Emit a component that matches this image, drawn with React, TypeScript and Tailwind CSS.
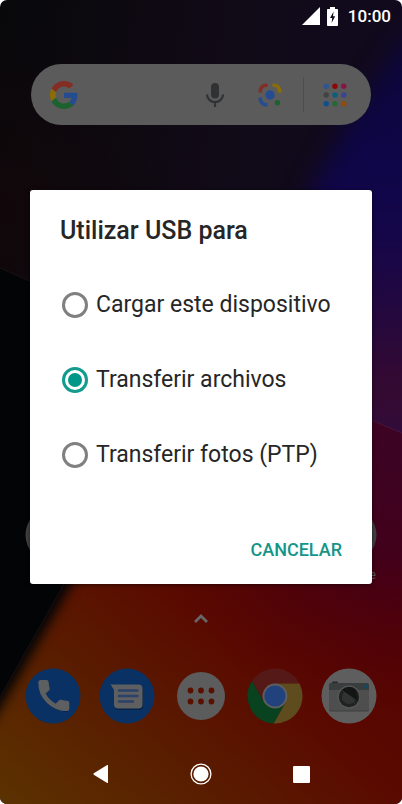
import { useState } from 'react';
import type { ReactNode } from 'react';

const USB_MODES = [
  { value: 'charge', label: 'Cargar este dispositivo' },
  { value: 'files', label: 'Transferir archivos' },
  { value: 'photos', label: 'Transferir fotos (PTP)' },
];

const Wallpaper = () => (
  <svg
    className="absolute inset-0 size-full"
    viewBox="0 0 402 804"
    preserveAspectRatio="none"
    aria-hidden="true"
  >
    <defs>
      <linearGradient id="night" x1="0" y1="0" x2="1" y2="0.3">
        <stop offset="0" stopColor="#08080a" />
        <stop offset="0.5" stopColor="#110a16" />
        <stop offset="1" stopColor="#110a20" />
      </linearGradient>
      <linearGradient id="side" gradientUnits="userSpaceOnUse" x1="0" y1="20" x2="0" y2="440">
        <stop offset="0" stopColor="#0d0738" />
        <stop offset="0.35" stopColor="#0e0648" />
        <stop offset="0.5" stopColor="#14064a" />
        <stop offset="0.7" stopColor="#24083e" />
        <stop offset="0.88" stopColor="#350a30" />
        <stop offset="1" stopColor="#300c3c" />
      </linearGradient>
      <linearGradient id="ember" gradientUnits="userSpaceOnUse" x1="0" y1="804" x2="300" y2="480">
        <stop offset="0" stopColor="#5c3200" />
        <stop offset="0.3" stopColor="#591f00" />
        <stop offset="0.62" stopColor="#5a0a00" />
        <stop offset="1" stopColor="#540002" />
      </linearGradient>
      <radialGradient id="wine" gradientUnits="userSpaceOnUse" cx="402" cy="450" r="270">
        <stop offset="0" stopColor="#3c0424" />
        <stop offset="0.4" stopColor="#42001a" />
        <stop offset="1" stopColor="#520004" stopOpacity="0" />
      </radialGradient>
      <radialGradient id="dusk" gradientUnits="userSpaceOnUse" cx="0" cy="210" r="180">
        <stop offset="0" stopColor="#11070a" />
        <stop offset="1" stopColor="#11070a" stopOpacity="0" />
      </radialGradient>
      <filter
        id="soft"
        filterUnits="userSpaceOnUse"
        x="-100"
        y="-100"
        width="700"
        height="1000"
        colorInterpolationFilters="sRGB"
      >
        <feGaussianBlur stdDeviation="6" />
      </filter>
      <filter
        id="haze"
        filterUnits="userSpaceOnUse"
        x="-100"
        y="-100"
        width="700"
        height="1000"
        colorInterpolationFilters="sRGB"
      >
        <feGaussianBlur stdDeviation="12" />
      </filter>
    </defs>
    <rect width="402" height="804" fill="url(#night)" />
    <rect width="402" height="804" fill="url(#dusk)" />
    <path d="M460 -10 L396 50 L345 130 L306 200 V500 H460Z" fill="url(#side)" filter="url(#haze)" />
    <path d="M340 407 L402 433 V804 H0 V560 H340Z" fill="url(#ember)" />
    <path d="M340 407 L402 433 V804 H0 V560 H340Z" fill="url(#wine)" />
    <path d="M340 407 L402 433" stroke="#451540" strokeWidth="1" />
    <path d="M-60 440 H120 L72 584 L2 706 L-60 800Z" fill="#030406" filter="url(#soft)" />
    <path d="M0 268 L60 294 V591 L0 697Z" fill="#030406" />
    <path d="M0 268 L60 294" stroke="#1d1114" strokeWidth="1" />
    <path d="M64 584 L0 697" stroke="#151214" strokeWidth="1" />
  </svg>
);

const StatusBar = () => (
  <header className="relative flex h-8 items-center justify-end px-[11px] text-white">
    <svg className="mr-[7px] size-[18px]" viewBox="0 0 18 18" aria-hidden="true">
      <path d="M0 18 L18 0 V18Z" fill="currentColor" />
    </svg>
    <svg className="mr-[10px] h-[19px] w-[11px]" viewBox="0 0 11 19" aria-hidden="true">
      <path
        d="M3 0H8V2H10.2Q11 2 11 2.8V18.2Q11 19 10.2 19H.8Q0 19 0 18.2V2.8Q0 2 .8 2H3Z"
        fill="currentColor"
      />
      <path d="M6.6 4.6 L3 11 H5.2 L4.6 16 L8.2 9.2 H6Z" fill="#140d1c" />
    </svg>
    <time className="text-[17px] leading-5 font-medium">10:00</time>
  </header>
);

const GoogleLogo = () => (
  <svg className="size-7" viewBox="0 0 48 48" aria-hidden="true">
    <path
      fill="#842d24"
      d="M24 9.5c3.54 0 6.71 1.22 9.21 3.6l6.85-6.85C35.9 2.38 30.47 0 24 0 14.62 0 6.51 5.38 2.56 13.22l7.98 6.19C12.43 13.72 17.74 9.5 24 9.5z"
    />
    <path
      fill="#254c90"
      d="M46.98 24.55c0-1.57-.15-3.09-.38-4.55H24v9.02h12.94c-.58 2.96-2.26 5.48-4.78 7.18l7.73 6c4.51-4.18 7.09-10.36 7.09-17.65z"
    />
    <path
      fill="#8a6c08"
      d="M10.53 28.59c-.48-1.45-.76-2.99-.76-4.59s.27-3.14.76-4.59l-7.98-6.19C.92 16.46 0 20.12 0 24c0 3.88.92 7.54 2.56 10.78l7.97-6.19z"
    />
    <path
      fill="#1c622f"
      d="M24 48c6.48 0 11.93-2.13 15.89-5.81l-7.73-6c-2.15 1.45-4.92 2.3-8.16 2.3-6.26 0-11.57-4.22-13.47-9.91l-7.98 6.19C6.51 42.62 14.62 48 24 48z"
    />
  </svg>
);

const LAUNCHER_DOTS = [
  '#2d5494', '#8f0508', '#8a1440',
  '#404244', '#0a5f80', '#3a4494',
  '#0f4f8c', '#246a36', '#944a08',
];

const SearchBar = () => (
  <div className="relative mx-[31px] mt-8 flex h-[61px] items-center rounded-full bg-[#5b5b5b] pr-[24px] pl-[19px]">
    <GoogleLogo />
    <input
      type="search"
      aria-label="Buscar en Google"
      className="h-full min-w-0 flex-1 bg-transparent px-2 outline-none"
    />
    <button type="button" aria-label="Búsqueda por voz">
      <svg className="h-6 w-[18px]" viewBox="0 0 18 24" fill="none">
        <rect x="5" width="8" height="15.5" rx="4" fill="#303234" />
        <path d="M1 11.5a8 7.6 0 0 0 16 0M9 19v5" stroke="#303234" strokeWidth="2.2" />
      </svg>
    </button>
    <button type="button" aria-label="Google Lens" className="ml-[34px]">
      <svg className="size-6" viewBox="0 0 24 24" fill="none" strokeWidth="3.6">
        <path d="M2.3 9.5V8a5.7 5.7 0 0 1 5.7-5.7h1.5" stroke="#842d24" />
        <path d="M14.5 2.3H16A5.7 5.7 0 0 1 21.7 8v1.5" stroke="#8a6c08" />
        <path d="M2.3 14.5V16A5.7 5.7 0 0 0 8 21.7h1.5" stroke="#254c90" />
        <circle cx="12" cy="12" r="4.7" fill="#254c90" />
        <circle cx="19.5" cy="19.7" r="2.7" fill="#1c622f" />
      </svg>
    </button>
    <span className="ml-[21px] h-[35px] w-px bg-[#4e4e4e]" />
    <button type="button" aria-label="Aplicaciones" className="ml-[19px]">
      <svg className="size-6" viewBox="0 0 24 24">
        {LAUNCHER_DOTS.map((color, i) => (
          <circle
            key={color}
            cx={3.2 + (i % 3) * 8.8}
            cy={3.2 + Math.floor(i / 3) * 8.8}
            r="2.7"
            fill={color}
          />
        ))}
      </svg>
    </button>
  </div>
);

const HANDSET =
  'M6.62 10.79c1.44 2.83 3.76 5.14 6.59 6.59l2.2-2.2c.27-.27.67-.36 1.02-.24 1.12.37 2.33.57 3.57.57.55 0 1 .45 1 1V20c0 .55-.45 1-1 1-9.39 0-17-7.61-17-17 0-.55.45-1 1-1h3.5c.55 0 1 .45 1 1 0 1.25.2 2.45.57 3.57.11.35.03.74-.25 1.02l-2.2 2.2z';

const PhoneIcon = () => (
  <svg className="size-14" viewBox="0 0 56 56" aria-hidden="true">
    <circle cx="28" cy="28" r="27.5" fill="#0a3163" />
    <path transform="translate(9 9) scale(1.65)" fill="#072346" d={HANDSET} />
    <path
      transform="translate(9 7.8) scale(1.65)"
      fill="#5e5f60"
      stroke="#5e5f60"
      strokeWidth="0.8"
      strokeLinejoin="round"
      d={HANDSET}
    />
  </svg>
);

const MessagesIcon = () => (
  <svg className="size-14" viewBox="0 0 56 56" aria-hidden="true">
    <circle cx="28" cy="28" r="27.5" fill="#0a3163" />
    <path d="M12 17.5H40a4 4 0 0 1 4 4V38a4 4 0 0 1-4 4H19.5a4 4 0 0 1-4-4V22Z" fill="#072346" />
    <path
      d="M11.5 16.5H39.5a4 4 0 0 1 4 4V36.5a4 4 0 0 1-4 4H19a4 4 0 0 1-4-4V22Z"
      fill="#5e5f60"
    />
    <path
      d="M20 22.5H38.5M20 28H38.5M20 33.5H34"
      stroke="#2c4068"
      strokeWidth="2.4"
      strokeLinecap="round"
    />
  </svg>
);

const DrawerIcon = () => (
  <svg className="size-12" viewBox="0 0 48 48" aria-hidden="true">
    <circle cx="24" cy="24" r="24" fill="#5c5c5c" />
    {[18.5, 29.5].map((cy) =>
      [13.5, 24, 34.5].map((cx) => (
        <circle key={`${cx}-${cy}`} cx={cx} cy={cy} r="2.9" fill="#5a1000" />
      )),
    )}
  </svg>
);

const ChromeIcon = () => (
  <svg className="size-14" viewBox="0 0 56 56" aria-hidden="true">
    <path d="M4.9 13A27.5 27.5 0 0 1 52.5 15.5H28L17.2 34.25Z" fill="#551917" />
    <path d="M4.9 13L17.2 34.25H38.8L26.6 55.5A27.5 27.5 0 0 1 4.9 13Z" fill="#08421f" />
    <path d="M52.5 15.5A27.5 27.5 0 0 1 26.6 55.5L38.8 34.25L28 15.5Z" fill="#5e4b1e" />
    <circle cx="28" cy="28" r="12.5" fill="#5e5e5e" />
    <circle cx="28" cy="28" r="10.6" fill="#21427c" />
  </svg>
);

const CameraIcon = () => (
  <svg className="size-14" viewBox="0 0 56 56" aria-hidden="true">
    <circle cx="28" cy="28" r="27.5" fill="#5e5e5e" />
    <rect x="11" y="13.5" width="6" height="4" rx="1" fill="#262a2b" />
    <rect x="8" y="15.5" width="40" height="28" rx="2" fill="#3c3e3e" />
    <rect x="8" y="15" width="40" height="27.5" rx="2" fill="#4e4e4e" />
    <path d="M8 22V17a2 2 0 0 1 2-2H46a2 2 0 0 1 2 2V22Z" fill="#3a3d3e" />
    <circle cx="45" cy="18.5" r="1.9" fill="#124a60" />
    <circle cx="28" cy="29" r="11.5" fill="#565656" />
    <circle cx="28" cy="29" r="10.2" fill="#202121" />
    <circle cx="28" cy="29" r="7.2" fill="#303131" />
    <path d="M21 22A10 10 0 0 1 34.5 21.5L37 33Z" fill="#131414" />
    <path d="M21.5 22.5L34 36" stroke="#363737" strokeWidth="0.8" />
  </svg>
);

const DOCK: { name: string; icon: ReactNode }[] = [
  { name: 'Teléfono', icon: <PhoneIcon /> },
  { name: 'Mensajes', icon: <MessagesIcon /> },
  { name: 'Todas las aplicaciones', icon: <DrawerIcon /> },
  { name: 'Chrome', icon: <ChromeIcon /> },
  { name: 'Cámara', icon: <CameraIcon /> },
];

const HomeScreen = () => (
  <main className="relative flex flex-1 flex-col">
    <SearchBar />
    <div className="mt-auto flex justify-between px-4">
      <div className="flex w-[74px] flex-col items-center">
        <svg className="size-14" viewBox="0 0 56 56" aria-hidden="true">
          <circle cx="28" cy="28" r="27.5" fill="#404040" />
          <circle cx="9" cy="19" r="5" fill="#5c4012" />
        </svg>
      </div>
      <div className="flex w-[74px] flex-col items-center">
        <svg className="size-14" viewBox="0 0 56 56" aria-hidden="true">
          <circle cx="28" cy="28" r="27.5" fill="#404040" />
        </svg>
        <span className="mt-1 text-[12px] leading-4 text-[#5c5c5c]">Play Store</span>
      </div>
    </div>
    <svg className="mx-auto mt-[31px] mb-[45px] h-[9px] w-[14px]" viewBox="0 0 14 9" aria-hidden="true">
      <path d="M1 8L7 2L13 8" fill="none" stroke="#666666" strokeWidth="2.8" />
    </svg>
    <nav className="grid grid-cols-5 place-items-center px-4" aria-label="Favoritos">
      {DOCK.map(({ name, icon }) => (
        <button key={name} type="button" aria-label={name}>
          {icon}
        </button>
      ))}
    </nav>
  </main>
);

const UsbDialog = () => {
  const [mode, setMode] = useState('files');

  return (
    <div className="absolute inset-0 flex items-center px-[30px] pb-[30px]">
      <form
        role="dialog"
        aria-labelledby="usb-title"
        className="w-full rounded-[3px] bg-white px-[30px] pt-[25px] pb-[18px] text-[#262626] shadow-[0_1px_4px_rgba(0,0,0,0.5)]"
      >
        <h1 id="usb-title" className="text-[25px] leading-8 font-medium">
          Utilizar USB para
        </h1>
        <fieldset className="mt-5">
          {USB_MODES.map(({ value, label }) => (
            <label key={value} className="flex h-[75px] items-center gap-2 pl-[2px] text-[23px] leading-7">
              <input
                type="radio"
                name="usb-mode"
                value={value}
                checked={mode === value}
                onChange={() => setMode(value)}
                className="grid size-[26px] shrink-0 appearance-none place-content-center rounded-full border-[3px] border-[#808080] before:size-[14px] before:rounded-full checked:border-[#119c8f] checked:before:bg-[#009688]"
              />
              {label}
            </label>
          ))}
        </fieldset>
        <div className="mt-[42px] flex justify-end">
          <button type="button" className="h-8 text-[18px] leading-6 font-medium text-[#159588]">
            CANCELAR
          </button>
        </div>
      </form>
    </div>
  );
};

const NavigationBar = () => (
  <footer className="relative mt-5 grid h-[60px] grid-cols-3 place-items-center px-[12.5%] text-white">
    <button type="button" aria-label="Atrás">
      <svg className="h-[18px] w-4" viewBox="0 0 16 18">
        <path
          d="M15 .5V17.5Q15 18.3 14.2 17.9L.8 9.7Q0 9 .8 8.3L14.2 .1Q15 -.3 15 .5Z"
          fill="currentColor"
        />
      </svg>
    </button>
    <button type="button" aria-label="Inicio">
      <svg className="size-[22px]" viewBox="0 0 22 22">
        <circle cx="11" cy="11" r="9.9" fill="none" stroke="currentColor" strokeWidth="1.3" />
        <circle cx="11" cy="11" r="7.6" fill="currentColor" />
      </svg>
    </button>
    <button type="button" aria-label="Recientes">
      <svg className="size-[17px]" viewBox="0 0 17 17">
        <rect width="17" height="17" rx="1.2" fill="currentColor" />
      </svg>
    </button>
  </footer>
);

const App = () => (
  <div className="bg-white font-[Roboto,sans-serif]">
    <div className="relative flex min-h-screen flex-col overflow-hidden rounded-[7px]">
      <Wallpaper />
      <StatusBar />
      <HomeScreen />
      <NavigationBar />
      <UsbDialog />
    </div>
  </div>
);

export default App;
